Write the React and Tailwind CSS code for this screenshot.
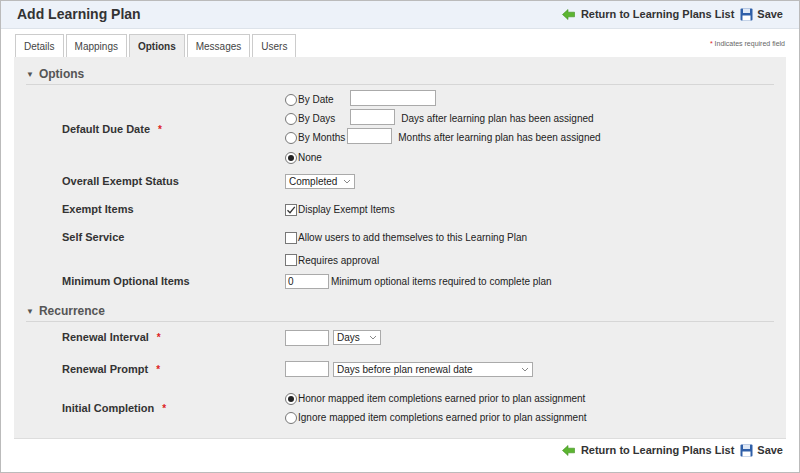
import React from "react";

const Req = () => <span className="text-[#d22] ml-2 text-[10px]">*</span>;
const Radio = ({ on }) => (
  <span className="inline-flex w-[12px] h-[12px] rounded-full border border-[#777] bg-white items-center justify-center mr-[1px]">
    {on && <span className="w-[6px] h-[6px] rounded-full bg-[#222]" />}
  </span>
);
const Check = ({ on }) => (
  <span className="inline-flex w-[12px] h-[12px] border border-[#777] bg-white items-center justify-center mr-[1px]">
    {on && (
      <svg width="10" height="10" viewBox="0 0 10 10"><path d="M1.5 5.2 L4 7.7 L8.8 1.8" stroke="#333" strokeWidth="1.3" fill="none" /></svg>
    )}
  </span>
);
const Input = ({ w }) => <span className={`inline-block h-[16px] bg-white border border-[#aaa] ${w}`} />;
const Select = ({ w, label }) => (
  <span className={`inline-flex items-center justify-between h-[15px] bg-white border border-[#aaa] px-[3px] text-[10px] whitespace-nowrap ${w}`}>
    <span>{label}</span>
    <svg width="8" height="5" viewBox="0 0 8 5"><path d="M1 1 L4 4 L7 1" stroke="#888" fill="none" /></svg>
  </span>
);
const Arrow = () => (
  <svg width="13" height="11" viewBox="0 0 13 11"><path d="M0.5 5.5 L6 0.5 V3.2 H12.5 V7.8 H6 V10.5 Z" fill="#5cb531" stroke="#3f8f1e" strokeWidth="0.6" /></svg>
);
const Disk = () => (
  <svg width="13" height="13" viewBox="0 0 13 13"><rect x="0.5" y="0.5" width="12" height="12" rx="1" fill="#2f5fa8" /><rect x="3" y="0.5" width="7" height="4.5" fill="#dfe8f5" /><rect x="2.5" y="7.5" width="8" height="5" fill="#fff" /></svg>
);
const Links = () => (
  <div className="flex items-center gap-[4px] text-[11px] font-bold text-[#333]">
    <Arrow /><span className="ml-[2px]">Return to Learning Plans List</span>
    <span className="ml-[2px]"><Disk /></span><span>Save</span>
  </div>
);
const Row = ({ h, label, req, children }) => (
  <div className="flex" style={{ height: h }}>
    <div className="w-[271px] pl-[48px] flex items-center text-[11px] font-bold text-[#333]">{label}{req && <Req />}</div>
    <div className="flex flex-col justify-center">{children}</div>
  </div>
);
const Section = ({ title }) => (
  <div className="mx-[12px] border-b border-[#d6d6d6] h-[28px] flex items-end pb-[1px] text-[12px] font-bold text-[#555]">
    <span className="text-[8px] mr-[5px] mb-[2px]">▼</span>{title}
  </div>
);

export default function App() {
  return (
    <div className="w-[800px] h-[473px] border border-[#bbb] bg-white text-[#222] relative" style={{ fontFamily: "Arial, 'Liberation Sans', sans-serif" }}>
      <div className="h-[28px] bg-[#edf2f9] border-b border-[#dde3ea] flex items-center justify-between pl-[16px] pr-[16px]">
        <span className="text-[14px] font-bold text-[#333]">Add Learning Plan</span>
        <Links />
      </div>
      <div className="flex items-end justify-between pl-[14px] pr-[14px] mt-[5px]">
        <div className="flex gap-[2px] text-[10px]">
          {["Details", "Mappings", "Options", "Messages", "Users"].map((t) => (
            <div key={t} className={`h-[23px] px-[8px] flex items-center border border-[#ccc] border-b-0 ${t === "Options" ? "bg-[#eee] font-bold text-[#333]" : "bg-white text-[#444]"}`}>{t}</div>
          ))}
        </div>
        <div className="text-[7px] text-[#666] mb-[8px]"><span className="text-[#d22]">*</span> Indicates required field</div>
      </div>
      <div className="mx-[13px] bg-[#eeeeee] h-[382px] border-b border-[#ddd]">
        <Section title="Options" />
        <div className="text-[10px] text-[#222] mt-[5px]">
          <div className="flex">
            <div className="w-[271px] pl-[48px] flex items-center text-[11px] font-bold text-[#333]">Default Due Date<Req /></div>
            <div className="flex flex-col">
              <div className="h-[19px] flex items-center"><Radio />By Date<span className="ml-[16px]"><Input w="w-[86px]" /></span></div>
              <div className="h-[19px] flex items-center"><Radio />By Days<span className="ml-[15px]"><Input w="w-[45px]" /></span><span className="ml-[6px]">Days after learning plan has been assigned</span></div>
              <div className="h-[19px] flex items-center"><Radio />By Months<span className="ml-[2px]"><Input w="w-[45px]" /></span><span className="ml-[6px]">Months after learning plan has been assigned</span></div>
              <div className="h-[21px] flex items-center"><Radio on />None</div>
            </div>
          </div>
          <Row h={27} label="Overall Exempt Status"><Select w="w-[70px]" label="Completed" /></Row>
          <Row h={29} label="Exempt Items"><div className="flex items-center"><Check on />Display Exempt Items</div></Row>
          <Row h={27} label="Self Service"><div className="flex items-center"><Check />Allow users to add themselves to this Learning Plan</div></Row>
          <Row h={18} label=""><div className="flex items-center"><Check />Requires approval</div></Row>
          <Row h={25} label="Minimum Optional Items"><div className="flex items-center"><span className="inline-flex items-center h-[15px] w-[44px] bg-white border border-[#aaa] px-[2px]">0</span><span className="ml-[2px]">Minimum optional items required to complete plan</span></div></Row>
        </div>
        <Section title="Recurrence" />
        <div className="text-[10px] text-[#222] mt-[1px]">
          <Row h={29} label="Renewal Interval" req><div className="flex items-center gap-[4px]"><Input w="w-[44px]" /><Select w="w-[48px]" label="Days" /></div></Row>
          <Row h={34} label="Renewal Prompt" req><div className="flex items-center gap-[4px]"><Input w="w-[44px]" /><Select w="w-[200px]" label="Days before plan renewal date" /></div></Row>
          <Row h={44} label="Initial Completion" req>
            <div className="flex items-center h-[19px]"><Radio on />Honor mapped item completions earned prior to plan assignment</div>
            <div className="flex items-center h-[19px]"><Radio />Ignore mapped item completions earned prior to plan assignment</div>
          </Row>
        </div>
      </div>
      <div className="flex justify-end pr-[16px] mt-[3px]"><Links /></div>
    </div>
  );
}
